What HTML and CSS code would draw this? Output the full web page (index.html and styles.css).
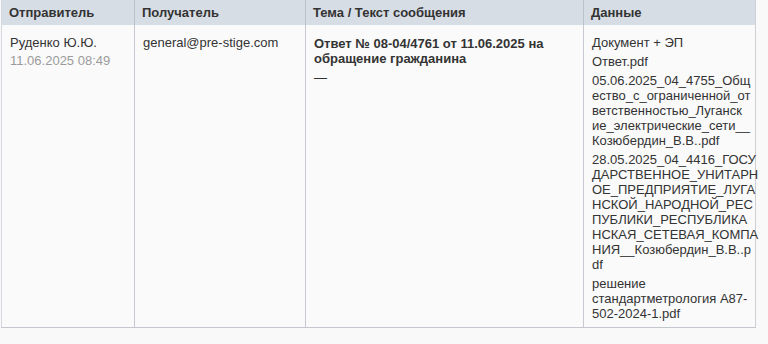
FILE: index.html
```html
<!DOCTYPE html>
<html lang="ru">
<head>
<meta charset="utf-8">
<link rel="stylesheet" href="styles.css">
</head>
<body>
<table class="mail">
  <colgroup>
    <col class="c-from">
    <col class="c-to">
    <col class="c-subj">
    <col class="c-data">
  </colgroup>
  <thead>
    <tr>
      <th>Отправитель</th>
      <th>Получатель</th>
      <th>Тема / Текст сообщения</th>
      <th>Данные</th>
    </tr>
  </thead>
  <tbody>
    <tr>
      <td>
        <div class="name">Руденко Ю.Ю.</div>
        <div class="date">11.06.2025 08:49</div>
      </td>
      <td>general@pre-stige.com</td>
      <td>
        <div class="subject">Ответ № 08-04/4761 от 11.06.2025 на<br>обращение гражданина</div>
        <div class="dash">—</div>
      </td>
      <td>
        <div class="item">Документ + ЭП</div>
        <div class="item">Ответ.pdf</div>
        <div class="item">05.06.2025_04_4755_Общ<br>ество_с_ограниченной_от<br>ветственностью_Луганск<br>ие_электрические_сети__<br>Козюбердин_В.В..pdf</div>
        <div class="item">28.05.2025_04_4416_ГОСУ<br>ДАРСТВЕННОЕ_УНИТАРН<br>ОЕ_ПРЕДПРИЯТИЕ_ЛУГА<br>НСКОЙ_НАРОДНОЙ_РЕС<br>ПУБЛИКИ_РЕСПУБЛИКА<br>НСКАЯ_СЕТЕВАЯ_КОМПА<br>НИЯ__Козюбердин_В.В..p<br>df</div>
        <div class="item">решение<br>стандартметрология А87-<br>502-2024-1.pdf</div>
      </td>
    </tr>
  </tbody>
</table>
</body>
</html>
```

FILE: styles.css
```css
html, body {
  margin: 0;
  padding: 0;
  background: #f9f9f9;
}
body {
  padding: 0 0 0 1px;
  font-family: "Liberation Sans", Arial, sans-serif;
  font-size: 13px;
  color: #333;
}
.mail {
  border-collapse: collapse;
  table-layout: fixed;
  width: 754px;
  border-left: 1px solid #d6d6de;
  border-right: 1px solid #cfcfd6;
  border-bottom: 1px solid #c6c6cf;
}
.c-from { width: 133px; }
.c-to { width: 171px; }
.c-subj { width: 278px; }
.c-data { width: 172px; }
.mail th {
  background: #d7dde5;
  height: 25px;
  padding: 0 7px;
  text-align: left;
  font-weight: 700;
  line-height: 15px;
  color: #333;
  border-left: 1px solid #bcc3cc;
}
.mail th:first-child { border-left: none; }
.mail td {
  vertical-align: top;
  padding: 10px 8px 6px 8px;
  line-height: 15px;
  border-left: 1px solid #c8c8d0;
  background: #fafafa;
}
.mail td:first-child { border-left: none; }
.date {
  color: #9a9a9a;
  margin-top: 3px;
}
.subject {
  font-weight: 700;
  margin-top: 1px;
}
.dash {
  margin-top: 4px;
}
.item {
  white-space: nowrap;
}
.item + .item {
  margin-top: 4px;
}
```
